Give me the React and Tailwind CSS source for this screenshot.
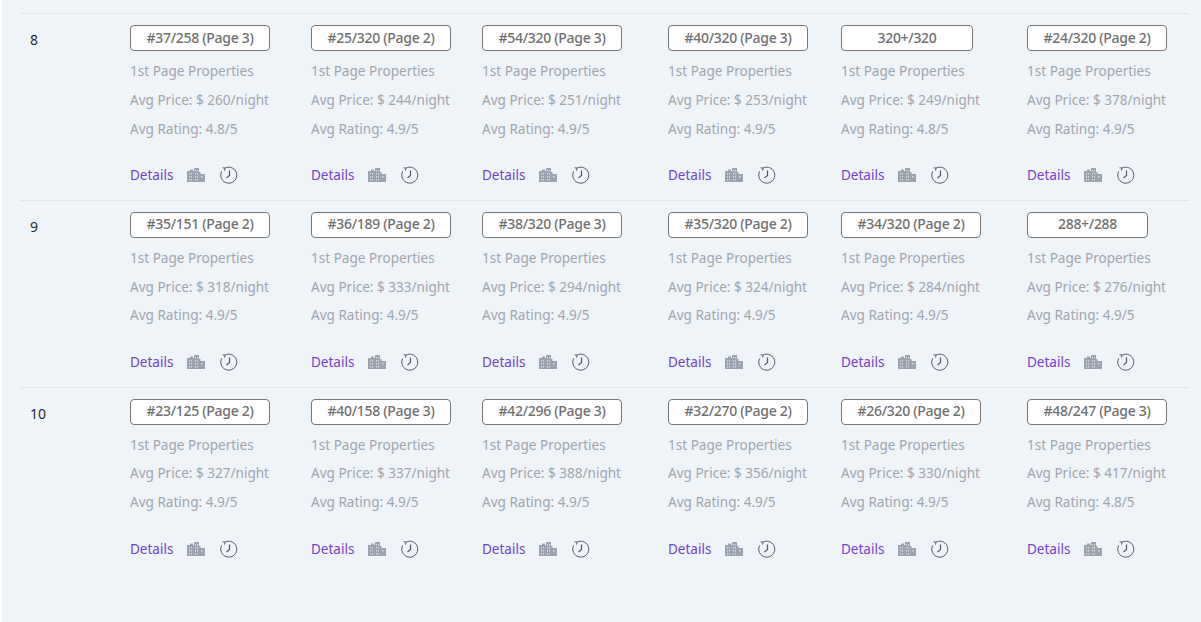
import React from 'react';

const font = '[font-family:"Noto_Sans",sans-serif]';

const rows = [
  {
    n: 8,
    h: 'h-[186.9px]',
    cells: [
      ['#37/258 (Page 3)', 260, '4.8'],
      ['#25/320 (Page 2)', 244, '4.9'],
      ['#54/320 (Page 3)', 251, '4.9'],
      ['#40/320 (Page 3)', 253, '4.9'],
      ['320+/320', 249, '4.8', 'w-[132px]'],
      ['#24/320 (Page 2)', 378, '4.9'],
    ],
  },
  {
    n: 9,
    h: 'h-[186.65px]',
    cells: [
      ['#35/151 (Page 2)', 318, '4.9'],
      ['#36/189 (Page 2)', 333, '4.9'],
      ['#38/320 (Page 3)', 294, '4.9'],
      ['#35/320 (Page 2)', 324, '4.9'],
      ['#34/320 (Page 2)', 284, '4.9'],
      ['288+/288', 276, '4.9', 'w-[121px]'],
    ],
  },
  {
    n: 10,
    h: 'h-[187px]',
    cells: [
      ['#23/125 (Page 2)', 327, '4.9'],
      ['#40/158 (Page 3)', 337, '4.9'],
      ['#42/296 (Page 3)', 388, '4.9'],
      ['#32/270 (Page 2)', 356, '4.9'],
      ['#26/320 (Page 2)', 330, '4.9'],
      ['#48/247 (Page 3)', 417, '4.8'],
    ],
  },
];

function BuildingsIcon() {
  return (
    <svg width="18" height="16" viewBox="0 0 18 16" fill="#9ca3af">
      <path d="M0 4h3V2.500h3V4h1V1h5v4h1.500v2H18v8H0z" />
      <g fill="#eff4f8" opacity="0.7">
        <rect x="2" y="6" width="1" height="1.500" />
        <rect x="4" y="6" width="1" height="1.500" />
        <rect x="8" y="3" width="1" height="1.500" />
        <rect x="10" y="3" width="1" height="1.500" />
        <rect x="2" y="9" width="1" height="1.500" />
        <rect x="4" y="9" width="1" height="1.500" />
        <rect x="8" y="6" width="1" height="1.500" />
        <rect x="10" y="6" width="1" height="1.500" />
        <rect x="8" y="9" width="1" height="1.500" />
        <rect x="10" y="9" width="1" height="1.500" />
        <rect x="14" y="9" width="1.500" height="1.500" />
        <rect x="2" y="12" width="1" height="1.500" />
        <rect x="4" y="12" width="1" height="1.500" />
        <rect x="8" y="12" width="1" height="1.500" />
        <rect x="10" y="12" width="1" height="1.500" />
      </g>
    </svg>
  );
}

function HistoryIcon() {
  return (
    <svg width="18" height="18" viewBox="0 0 18 18" fill="none" stroke="#555b65" strokeWidth="1">
      <path d="M5 2.100A8 8 0 1 1 1.700 5.400" />
      <path d="M2.600 1.800l2.500.3-.6 2.500" />
      <path d="M9.500 4.500V9.500L6.500 12" strokeWidth="1.200" />
    </svg>
  );
}

function Cell({ c }) {
  const [rank, price, rating, badgeW = 'w-[140px]'] = c;
  return (
    <div className="flex flex-col items-start">
      <div className={`${badgeW} h-[26px] flex items-center justify-center rounded border border-[#777777] bg-white text-[14px] font-medium tracking-[-0.3px] leading-[22px] pb-px text-[#707070]`}>
        {rank}
      </div>
      <div className="mt-[10.250px] h-[28.650px] text-[13.550px] leading-[20px] text-[#a0a6b0] whitespace-nowrap">1st Page Properties</div>
      <div className="h-[28.650px] text-[13.550px] leading-[20px] text-[#a0a6b0] whitespace-nowrap">Avg Price: $ {price}/night</div>
      <div className="h-[28.650px] text-[13.550px] leading-[20px] text-[#a0a6b0] whitespace-nowrap">Avg Rating: {rating}/5</div>
      <div className="mt-[18.300px] flex items-center h-[20px]">
        <span className="text-[13.500px] text-[#7443cc]">Details</span>
        <span className="ml-[14px]"><BuildingsIcon /></span>
        <span className="ml-[15px]"><HistoryIcon /></span>
      </div>
    </div>
  );
}

export default function App() {
  return (
    <div className={`${font} w-[1201px] h-[622px] overflow-hidden bg-white pl-[2px]`}>
      <div className="h-full bg-[#eff4f8] pl-[18px] pr-[12px] pt-[13px]">
        {rows.map((r) => (
          <div
            key={r.n}
            className={`${r.h} border-t border-[#dfe5ea] pt-[11px] grid grid-cols-[110px_181px_171px_186px_173px_186px_1fr]`}
          >
            <div className="pl-[10px] pt-[5.400px] text-[14px] leading-[20px] text-[#1f2937]">{r.n}</div>
            {r.cells.map((c) => (
              <Cell key={c[0]} c={c} />
            ))}
          </div>
        ))}
      </div>
    </div>
  );
}
